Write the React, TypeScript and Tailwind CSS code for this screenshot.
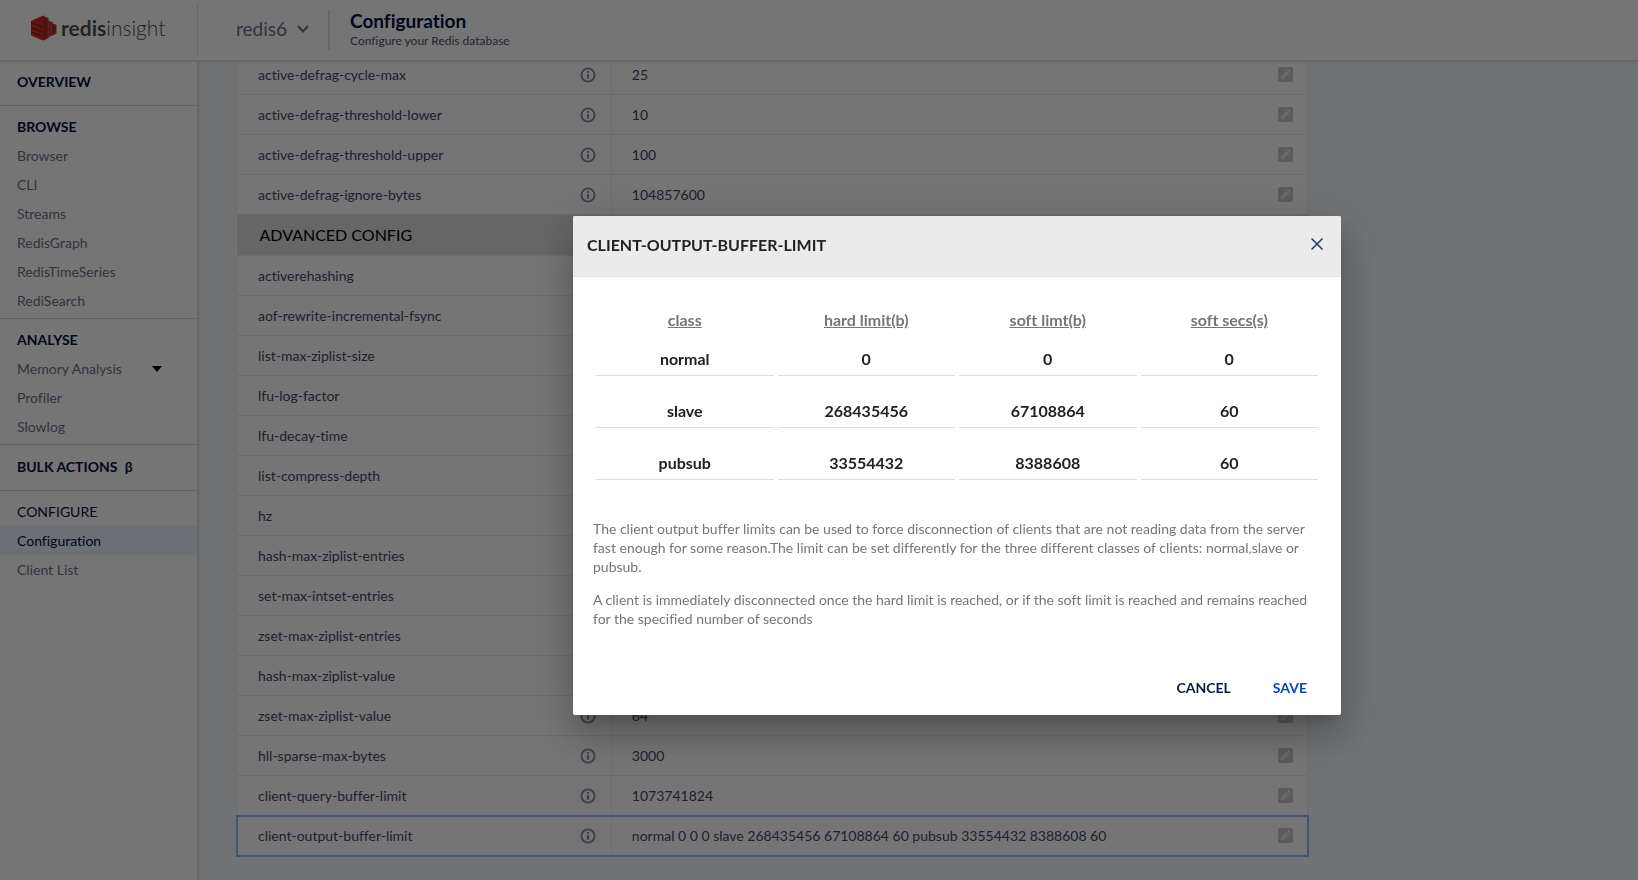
import React from "react";

type Setting = { name: string; value?: string; selected?: boolean };

const defragSettings: Setting[] = [
  { name: "active-defrag-cycle-max", value: "25" },
  { name: "active-defrag-threshold-lower", value: "10" },
  { name: "active-defrag-threshold-upper", value: "100" },
  { name: "active-defrag-ignore-bytes", value: "104857600" },
];

const advancedSettings: Setting[] = [
  { name: "activerehashing" },
  { name: "aof-rewrite-incremental-fsync" },
  { name: "list-max-ziplist-size" },
  { name: "lfu-log-factor" },
  { name: "lfu-decay-time" },
  { name: "list-compress-depth" },
  { name: "hz" },
  { name: "hash-max-ziplist-entries" },
  { name: "set-max-intset-entries" },
  { name: "zset-max-ziplist-entries" },
  { name: "hash-max-ziplist-value" },
  { name: "zset-max-ziplist-value", value: "64" },
  { name: "hll-sparse-max-bytes", value: "3000" },
  { name: "client-query-buffer-limit", value: "1073741824" },
  {
    name: "client-output-buffer-limit",
    value: "normal 0 0 0 slave 268435456 67108864 60 pubsub 33554432 8388608 60",
    selected: true,
  },
];

const limitColumns = ["class", "hard limit(b)", "soft limt(b)", "soft secs(s)"];
const limits = [
  { name: "normal", values: ["0", "0", "0"] },
  { name: "slave", values: ["268435456", "67108864", "60"] },
  { name: "pubsub", values: ["33554432", "8388608", "60"] },
];

function Logo() {
  return (
    <a href="#home" className="flex items-center gap-1 pb-1 text-[21px] leading-6 text-[#4a5250]">
      <svg viewBox="0 0 26 26" className="size-[26px]" aria-hidden="true">
        <path d="M0 6 L12 0.500 L16.500 2.800 V23.200 L12 25.500 L0 20.500 Z" fill="#c9302c" />
        <path d="M12.500 3 L16.500 2.800 V23.200 L12.500 25.500 Z" fill="#b32622" />
        <path d="M17.500 5.500 L20.800 7 V20.500 L17.500 22.500 Z" fill="#d0332f" />
        <path d="M21.800 8.500 L25.500 9.800 V18.500 L21.800 20.200 Z" fill="#b92a26" />
        <path d="M17 3 V23 M21.300 7 V20.500" stroke="#6d1a18" strokeWidth="1" />
        <path
          d="M0 7.500 L11.500 12 M0 12.500 L11.500 17 M0 17 L11.500 21.500"
          stroke="#7a1d1a"
          strokeWidth="1.200"
          fill="none"
        />
      </svg>
      <span>
        <span className="font-bold">redis</span>
        <span className="font-light">insight</span>
      </span>
    </a>
  );
}

function InfoIcon() {
  return (
    <svg viewBox="0 0 16 16" className="size-4" fill="none" aria-hidden="true">
      <circle cx="8" cy="8" r="6.600" stroke="currentColor" strokeWidth="1.900" />
      <path d="M8 7 V11.800" stroke="currentColor" strokeWidth="2" />
      <circle cx="8" cy="4.900" r="1.100" fill="currentColor" />
    </svg>
  );
}

function EditIcon() {
  return (
    <svg viewBox="0 0 15 15" className="size-[15px]" aria-hidden="true">
      <rect width="15" height="15" rx="2" fill="#c6c6c6" />
      <path d="M2.500 12.500 L3.200 9.300 L8.700 3.800 L11.200 6.300 L5.700 11.800 Z" fill="#ececec" />
      <path d="M9.400 3.100 L10.300 2.300 L12.700 4.700 L11.900 5.600 Z" fill="#ececec" />
      <path d="M4.600 10.400 L9 6" stroke="#c6c6c6" strokeWidth="0.700" />
    </svg>
  );
}

function NavSection({
  title,
  items = [],
  light = false,
  last = false,
}: {
  title: React.ReactNode;
  items?: string[];
  light?: boolean;
  last?: boolean;
}) {
  return (
    <section
      className={`${items.length ? "pt-1.5 pb-[3px]" : "pt-[7px] pb-[9px]"} ${last ? "" : "border-b border-[#d8d8d8]"}`}
    >
      <h2
        className={`px-[17px] text-[14px] leading-[29px] text-[#06103a] ${light ? "font-normal" : "font-bold"}`}
      >
        {title}
      </h2>
      <ul>
        {items.map((item) => (
          <li key={item}>
            <a
              href="#nav"
              className={`flex items-center px-[17px] text-[14px] leading-[29px] ${
                item === "Configuration" ? "bg-[#ebf3fe] text-[#06103a]" : "text-[#6a7289]"
              }`}
            >
              {item}
              {item === "Memory Analysis" && (
                <svg viewBox="0 0 10 6" className="mr-[18px] ml-auto h-1.5 w-2.5" aria-hidden="true">
                  <path d="M0 0 H10 L5 6 Z" fill="#000" />
                </svg>
              )}
            </a>
          </li>
        ))}
      </ul>
    </section>
  );
}

function SettingRow({ name, value, selected }: Setting) {
  return (
    <tr
      className={`h-10 bg-white text-[#3f4867] ${
        selected ? "outline-2 -outline-offset-1 outline-[#91b9ff]" : ""
      }`}
    >
      <th scope="row" className="border border-[#ececec] pr-[15px] pl-[21px] text-left font-normal">
        <div className="flex items-center justify-between">
          {name}
          <button type="button" aria-label={`About ${name}`} className="text-[#848aa0]">
            <InfoIcon />
          </button>
        </div>
      </th>
      <td className="border border-[#ececec] pr-3.5 pl-5">
        <div className="flex items-center justify-between">
          <span>{value}</span>
          <button type="button" aria-label={`Edit ${name}`}>
            <EditIcon />
          </button>
        </div>
      </td>
    </tr>
  );
}

function LimitDialog() {
  return (
    <div className="fixed inset-0 z-20 flex items-center justify-center bg-black/54 pt-[51px] pl-[276px]">
      <div
        role="dialog"
        aria-modal="true"
        aria-labelledby="dialog-title"
        className="w-full max-w-3xl rounded-xs bg-white text-[#222] shadow-[0_11px_15px_-7px_rgba(0,0,0,0.2),0_24px_38px_3px_rgba(0,0,0,0.14),0_9px_46px_8px_rgba(0,0,0,0.12)]"
      >
        <div className="flex h-[61px] items-center justify-between rounded-t-xs border-b border-[#dfdfdf] bg-[#ebebeb] pr-[18px] pb-0.5 pl-3.5">
          <h2 id="dialog-title" className="text-[16px] font-bold">
            CLIENT-OUTPUT-BUFFER-LIMIT
          </h2>
          <button type="button" aria-label="Close" className="pb-0.5 text-[#24365f]">
            <svg viewBox="0 0 12 12" className="size-3" aria-hidden="true">
              <path d="M0.500 0.500 L11.500 11.500 M11.500 0.500 L0.500 11.500" stroke="currentColor" strokeWidth="1.500" />
            </svg>
          </button>
        </div>
        <div className="px-[19px] pt-[27px]">
          <table className="w-full table-fixed border-separate border-spacing-x-1 border-spacing-y-0 text-center text-[16px]">
            <thead>
              <tr className="h-8">
                {limitColumns.map((column) => (
                  <th key={column} scope="col" className="font-bold text-[#757575] underline">
                    {column}
                  </th>
                ))}
              </tr>
            </thead>
            <tbody>
              {limits.map((limit, i) => (
                <tr key={limit.name} className={i === 0 ? "h-10" : "h-[52px]"}>
                  <th scope="row" className="border-b border-[#dcdcdc] pb-1 align-bottom font-bold">
                    {limit.name}
                  </th>
                  {limit.values.map((value, j) => (
                    <td key={limitColumns[j + 1]} className="border-b border-[#dcdcdc] pb-1 align-bottom">
                      <input
                        type="text"
                        defaultValue={value}
                        aria-label={`${limit.name} ${limitColumns[j + 1]}`}
                        className="block w-full text-center font-bold outline-none"
                      />
                    </td>
                  ))}
                </tr>
              ))}
            </tbody>
          </table>
          <div className="flex flex-col gap-3.5 px-px pt-[39px] text-[14px] leading-[19px] text-[#757575]">
            <p>
              The client output buffer limits can be used to force disconnection of clients that are not reading
              data from the server fast enough for some reason.The limit can be set differently for the three
              different classes of clients: normal,slave or pubsub.
            </p>
            <p>
              A client is immediately disconnected once the hard limit is reached, or if the soft limit is reached
              and remains reached for the specified number of seconds
            </p>
          </div>
        </div>
        <div className="flex justify-end gap-2.5 px-[18px] pt-[41px] pb-2.5 text-[14px] font-bold">
          <button type="button" className="h-9 px-4 text-[#0c1a45]">
            CANCEL
          </button>
          <button type="button" className="h-9 px-4 text-[#0b3fd0]">
            SAVE
          </button>
        </div>
      </div>
    </div>
  );
}

export default function App() {
  return (
    <div className="flex h-screen flex-col overflow-hidden bg-[#f5f8fc] font-[Lato,sans-serif] text-[14px] [font-variant-ligatures:no-common-ligatures]">
      <header className="z-10 -mb-px flex h-[61px] shrink-0 items-center border-b border-[#e2e2e2] bg-white shadow-[0_1px_3px_rgba(0,0,0,0.1)]">
        <div className="flex h-[52px] w-[198px] items-center border-r border-[#e2e2e2] pl-[31px]">
          <Logo />
        </div>
        <button type="button" className="flex items-center gap-2.5 pr-[19px] pb-0.5 pl-[38px] text-[19px] text-[#6a7289]">
          redis6
          <svg viewBox="0 0 12 8" className="h-2 w-3" fill="none" aria-hidden="true">
            <path d="M1 1 L6 6.500 L11 1" stroke="currentColor" strokeWidth="2" />
          </svg>
        </button>
        <div className="h-10 w-0.5 bg-[#e2e2e2]" />
        <div className="pl-5">
          <h1 className="text-[19px] leading-[22px] font-bold text-[#06103a]">Configuration</h1>
          <p className="text-[12px] leading-[18px] text-[#4a5370]">Configure your Redis database</p>
        </div>
      </header>
      <div className="flex min-h-0 flex-1">
        <nav className="w-[197px] shrink-0 bg-white shadow-[1px_0_4px_rgba(0,0,0,0.2)]">
          <NavSection title="OVERVIEW" />
          <NavSection
            title="BROWSE"
            items={["Browser", "CLI", "Streams", "RedisGraph", "RedisTimeSeries", "RediSearch"]}
          />
          <NavSection title="ANALYSE" items={["Memory Analysis", "Profiler", "Slowlog"]} />
          <NavSection
            title={
              <>
                BULK ACTIONS <span className="ml-1">β</span>
              </>
            }
          />
          <NavSection title="CONFIGURE" items={["Configuration", "Client List"]} light last />
        </nav>
        <main className="flex min-w-0 flex-1 flex-col justify-end overflow-hidden pr-5 pb-6 pl-[39px]">
          <table className="w-full max-w-[1072px] table-fixed border-collapse">
            <colgroup>
              <col className="w-[35%]" />
              <col />
            </colgroup>
            <tbody>
              {defragSettings.map((setting) => (
                <SettingRow key={setting.name} {...setting} />
              ))}
              <tr className="h-[41px] bg-[#dedede]">
                <th colSpan={2} scope="colgroup" className="pl-[23px] text-left text-[16px] font-normal text-black">
                  ADVANCED CONFIG
                </th>
              </tr>
              {advancedSettings.map((setting) => (
                <SettingRow key={setting.name} {...setting} />
              ))}
            </tbody>
          </table>
        </main>
      </div>
      <LimitDialog />
    </div>
  );
}
